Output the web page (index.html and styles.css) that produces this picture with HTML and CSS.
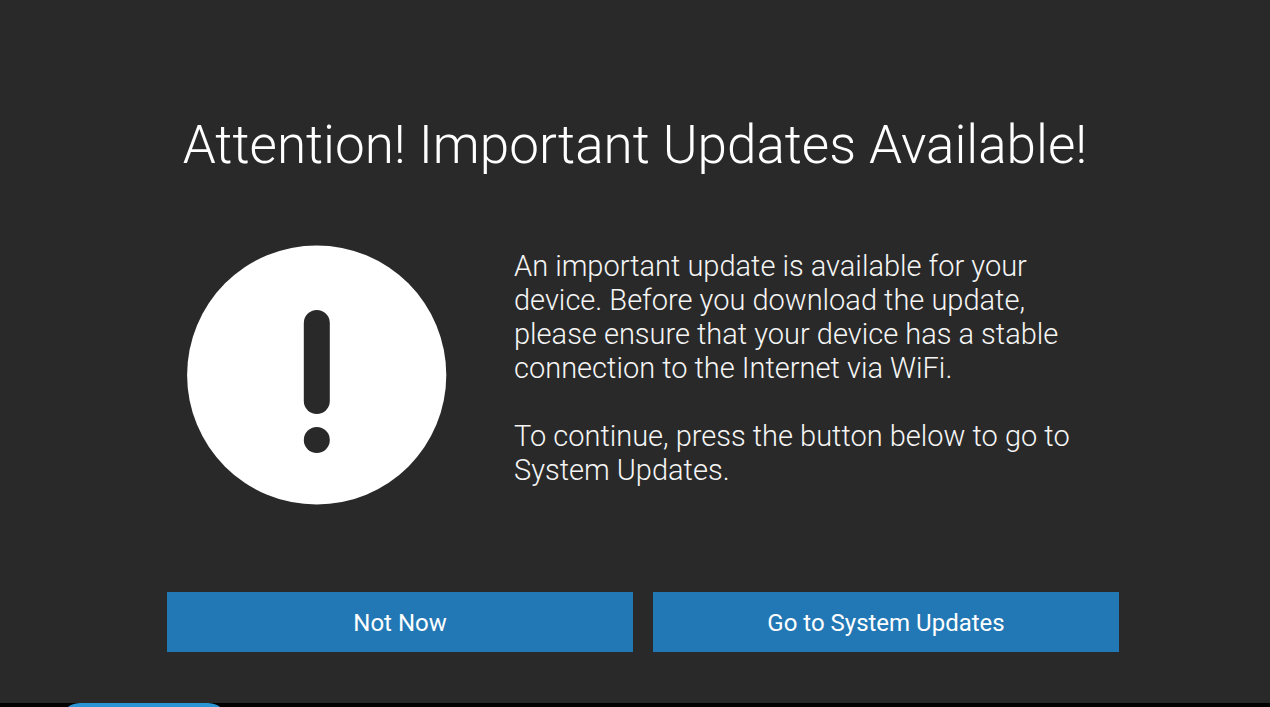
FILE: index.html
```html
<!DOCTYPE html>
<html lang="en">

<head>
    <meta charset="UTF-8" />
    <meta name="viewport" content="width=device-width, initial-scale=1.0" />
    <title>System Updates</title>
    <link rel="stylesheet" href="styles.css">
</head>

<body>
    <main class="dialog">
        <h1>Attention! Important Updates Available!</h1>

        <div class="content">
            <svg class="alert-icon" viewBox="0 0 260 260" aria-hidden="true">
                <circle cx="129.7" cy="130" r="129.6" fill="#fff" />
                <rect x="116.8" y="65" width="26" height="104" rx="13" fill="#292929" />
                <circle cx="129.8" cy="195" r="13" fill="#292929" />
            </svg>

            <div class="message">
                <p>An important update is available for your device. Before you download the update, please ensure that your device has a stable connection to the Internet via WiFi.</p>
                <p>To continue, press the button below to go to System Updates.</p>
            </div>
        </div>

        <div class="actions">
            <button type="button">Not Now</button>
            <button type="button">Go to System Updates</button>
        </div>
    </main>

    <footer class="bottom-bar">
        <div class="tab"></div>
    </footer>
</body>

</html>
```

FILE: styles.css
```css
* {
    box-sizing: border-box;
    margin: 0;
    padding: 0;
}

body {
    display: flex;
    flex-direction: column;
    height: 100vh;
    overflow: hidden;
    font-family: Roboto, sans-serif;
    background: #000;
    color: #fff;
}

.dialog {
    flex: 1;
    padding-top: 113px;
    background: #292929;
}

h1 {
    font-size: 53px;
    font-weight: 300;
    line-height: 64px;
    text-align: center;
}

.content {
    display: flex;
    gap: 67px;
    margin-top: 68px;
    padding: 0 171px 0 187px;
}

.alert-icon {
    flex: none;
    width: 260px;
    height: 260px;
}

.message {
    flex: 1;
    padding-top: 4px;
    font-size: 29px;
    font-weight: 300;
    line-height: 34px;
    color: #f5f5f5;
}

.message p + p {
    margin-top: 34px;
}

.actions {
    display: flex;
    gap: 20px;
    margin-top: 87px;
    padding: 0 151px 0 167px;
}

button {
    flex: 1;
    height: 60px;
    padding-top: 2px;
    border: none;
    background: #2278b5;
    color: #fff;
    font-family: inherit;
    font-size: 24px;
    cursor: pointer;
}

.bottom-bar {
    height: 4px;
    padding-left: 60px;
    overflow: hidden;
}

.tab {
    width: 168px;
    height: 40px;
    border-radius: 20px;
    background: #2a95d5;
}
```
